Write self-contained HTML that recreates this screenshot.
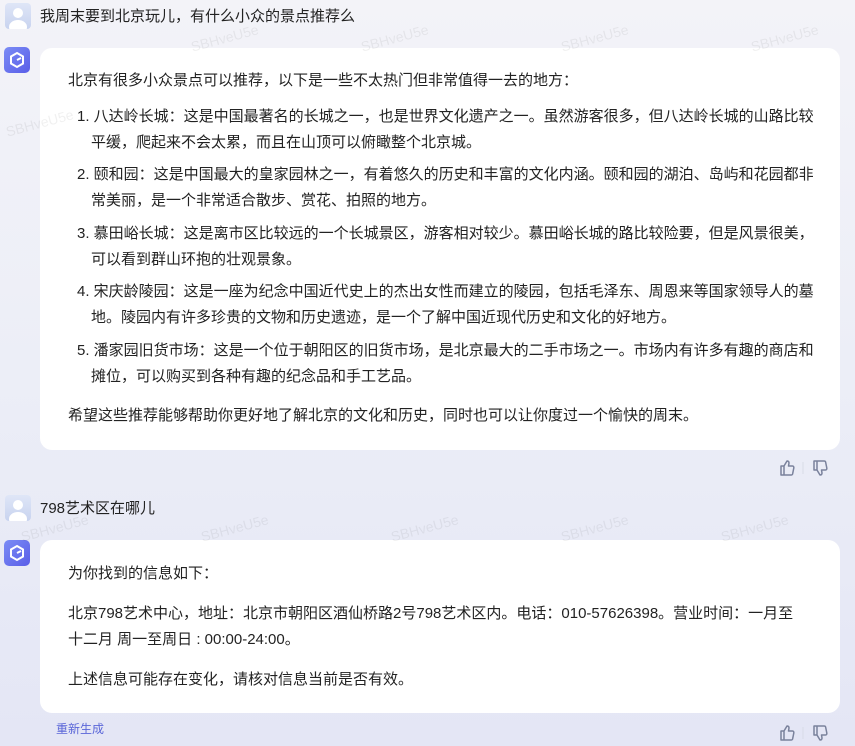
<!DOCTYPE html>
<html><head><meta charset="utf-8"><style>
*{margin:0;padding:0;box-sizing:border-box}
body{width:855px;height:746px;overflow:hidden;position:relative;background:linear-gradient(180deg,#f3f3f8 0%,#eceef7 50%,#e4e6f5 100%);font-family:"Liberation Sans","Noto Sans CJK SC",sans-serif;color:#222;font-size:15px}
.l{position:absolute;white-space:nowrap;line-height:20px}
.card{position:absolute;left:40px;width:800px;background:#fff;border-radius:12px}
.ua{position:absolute;width:26px;height:26px;border-radius:4px;background:linear-gradient(#dfe6f7,#c8d3ef);overflow:hidden}
.ua:before{content:"";position:absolute;left:8px;top:5px;width:10px;height:10px;border-radius:50%;background:#fff}
.ua:after{content:"";position:absolute;left:4px;top:17px;width:18px;height:14px;border-radius:50%;background:#fff}
.ba{position:absolute;width:26px;height:26px;border-radius:5px;background:linear-gradient(135deg,#7b8cf5,#5a5ee8)}
.wm{position:absolute;color:rgba(0,0,0,0.06);font-size:14px;transform:rotate(-15deg)}
.n{position:absolute}
</style></head><body>
<div class="ua" style="left:5px;top:3px"></div>
<div class="l" style="left:40px;top:7px">我周末要到北京玩儿，有什么小众的景点推荐么</div>
<div class="ba" style="left:4px;top:47px"><svg width="26" height="26" viewBox="0 0 26 26"><path d="M13 6l6 3.5v7L13 20l-6-3.5v-7z" fill="none" stroke="#fff" stroke-width="2"/><path d="M13 13l4-2" stroke="#fff" stroke-width="2"/></svg></div>
<div class="card" style="top:48px;height:402px"></div>
<div class="l" style="left:68px;top:71px">北京有很多小众景点可以推荐，以下是一些不太热门但非常值得一去的地方：</div>
<div class="l" style="left:77px;top:107px">1. 八达岭长城：这是中国最著名的长城之一，也是世界文化遗产之一。虽然游客很多，但八达岭长城的山路比较</div>
<div class="l" style="left:91px;top:133px">平缓，爬起来不会太累，而且在山顶可以俯瞰整个北京城。</div>
<div class="l" style="left:77px;top:165px">2. 颐和园：这是中国最大的皇家园林之一，有着悠久的历史和丰富的文化内涵。颐和园的湖泊、岛屿和花园都非</div>
<div class="l" style="left:91px;top:191px">常美丽，是一个非常适合散步、赏花、拍照的地方。</div>
<div class="l" style="left:77px;top:224px">3. 慕田峪长城：这是离市区比较远的一个长城景区，游客相对较少。慕田峪长城的路比较险要，但是风景很美，</div>
<div class="l" style="left:91px;top:250px">可以看到群山环抱的壮观景象。</div>
<div class="l" style="left:77px;top:282px">4. 宋庆龄陵园：这是一座为纪念中国近代史上的杰出女性而建立的陵园，包括毛泽东、周恩来等国家领导人的墓</div>
<div class="l" style="left:91px;top:308px">地。陵园内有许多珍贵的文物和历史遗迹，是一个了解中国近现代历史和文化的好地方。</div>
<div class="l" style="left:77px;top:341px">5. 潘家园旧货市场：这是一个位于朝阳区的旧货市场，是北京最大的二手市场之一。市场内有许多有趣的商店和</div>
<div class="l" style="left:91px;top:367px">摊位，可以购买到各种有趣的纪念品和手工艺品。</div>
<div class="l" style="left:68px;top:406px">希望这些推荐能够帮助你更好地了解北京的文化和历史，同时也可以让你度过一个愉快的周末。</div>
<svg class="n" style="left:780px;top:459px" width="50" height="18" viewBox="0 0 50 18"><g fill="none" stroke="#7a829c" stroke-width="1.5" stroke-linejoin="round"><path d="M1 7h3v9H1zM4 7l3-5c1.5 0 2 1 2 2l-.5 3h4c1 0 1.5 1 1.3 2l-1.2 6c-.2.8-.8 1-1.5 1H4"/><path d="M34 11h3V2h-3zM37 11l3 5c1.5 0 2-1 2-2l-.5-3h4c1 0 1.5-1 1.3-2l-1.2-6c-.2-.8-.8-1-1.5-1H37"/></g><path d="M23 3v12" stroke="#d8dbe6"/></svg>
<div class="ua" style="left:5px;top:495px"></div>
<div class="l" style="left:40px;top:499px">798艺术区在哪儿</div>
<div class="ba" style="left:4px;top:540px"><svg width="26" height="26" viewBox="0 0 26 26"><path d="M13 6l6 3.5v7L13 20l-6-3.5v-7z" fill="none" stroke="#fff" stroke-width="2"/><path d="M13 13l4-2" stroke="#fff" stroke-width="2"/></svg></div>
<div class="card" style="top:540px;height:173px"></div>
<div class="l" style="left:68px;top:564px">为你找到的信息如下：</div>
<div class="l" style="left:68px;top:604px">北京798艺术中心，地址：北京市朝阳区酒仙桥路2号798艺术区内。电话：010-57626398。营业时间：一月至</div>
<div class="l" style="left:68px;top:630px">十二月 周一至周日 : 00:00-24:00。</div>
<div class="l" style="left:68px;top:670px">上述信息可能存在变化，请核对信息当前是否有效。</div>
<div class="l" style="left:56px;top:719px;font-size:12px;color:#5a66d8">重新生成</div>
<svg class="n" style="left:780px;top:724px" width="50" height="18" viewBox="0 0 50 18"><g fill="none" stroke="#7a829c" stroke-width="1.5" stroke-linejoin="round"><path d="M1 7h3v9H1zM4 7l3-5c1.5 0 2 1 2 2l-.5 3h4c1 0 1.5 1 1.3 2l-1.2 6c-.2.8-.8 1-1.5 1H4"/><path d="M34 11h3V2h-3zM37 11l3 5c1.5 0 2-1 2-2l-.5-3h4c1 0 1.5-1 1.3-2l-1.2-6c-.2-.8-.8-1-1.5-1H37"/></g><path d="M23 3v12" stroke="#d8dbe6"/></svg>
<div class="wm" style="left:5px;top:115px">SBHveU5e</div>
<div class="wm" style="left:190px;top:30px">SBHveU5e</div>
<div class="wm" style="left:360px;top:30px">SBHveU5e</div>
<div class="wm" style="left:560px;top:30px">SBHveU5e</div>
<div class="wm" style="left:750px;top:30px">SBHveU5e</div>
<div class="wm" style="left:20px;top:520px">SBHveU5e</div>
<div class="wm" style="left:200px;top:520px">SBHveU5e</div>
<div class="wm" style="left:390px;top:520px">SBHveU5e</div>
<div class="wm" style="left:560px;top:520px">SBHveU5e</div>
<div class="wm" style="left:720px;top:520px">SBHveU5e</div>
</body></html>
